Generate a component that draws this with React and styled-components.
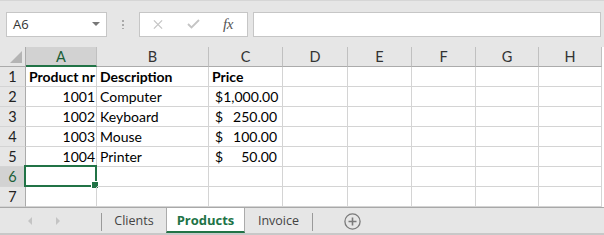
import React from "react"
import styled, { createGlobalStyle } from "styled-components"

const GlobalStyle = createGlobalStyle`
  * { box-sizing: border-box; }
  body {
    margin: 0;
    background: #ffffff;
    font-family: "Lato", "Noto Sans", sans-serif;
  }
`

const green = "#217346"

const Window = styled.div`
  width: 604px;
  height: 235px;
  background: #e6e6e6;
  display: flex;
  flex-direction: column;
  overflow: hidden;
`

const FormulaBar = styled.div`
  height: 47px;
  flex: none;
  display: flex;
  align-items: center;
  padding: 0 3px 0 6px;
  border-top: 1px solid #d6d6d6;
`

const NameBox = styled.div`
  width: 101px;
  height: 25px;
  background: #fff;
  border: 1px solid #c6c6c6;
  display: flex;
  align-items: center;
  justify-content: space-between;
  padding: 0 6px 0 6px;
  font-family: "Open Sans", "Noto Sans", sans-serif;
  font-size: 13px;
  color: #333;
`

const DropArrow = styled.span`
  width: 0;
  height: 0;
  border-left: 4px solid transparent;
  border-right: 4px solid transparent;
  border-top: 4px solid #777;
`

const Grip = styled.div`
  width: 2px;
  height: 10px;
  margin: 0 15px;
  background: radial-gradient(circle, #a9a9a9 0.9px, transparent 1px) 0 0 / 2px 4px repeat-y;
`

const FxGroup = styled.div`
  width: 109px;
  height: 25px;
  background: #fff;
  border: 1px solid #c6c6c6;
  display: flex;
  align-items: center;
  padding-left: 13px;
`

const FxButton = styled.span`
  width: ${(p) => p.w}px;
  display: flex;
  justify-content: center;
  align-items: center;
`

const FxText = styled.span`
  font-family: "Liberation Serif", serif;
  font-style: italic;
  font-size: 15px;
  color: #555;
  letter-spacing: -0.5px;
`

const FormulaInput = styled.div`
  flex: 1;
  height: 25px;
  margin-left: 5px;
  background: #fff;
  border: 1px solid #c6c6c6;
`

const Sheet = styled.div`
  display: grid;
  grid-template-columns: 26px 71px 112px 74px 65px 64px 64px 63px 63px;
  grid-template-rows: repeat(8, 20px);
  background: #fff;
  flex: none;
`

const Corner = styled.div`
  background: #e6e6e6;
  border-right: 1px solid #ababab;
  border-bottom: 1px solid #ababab;
  position: relative;
  &::after {
    content: "";
    position: absolute;
    right: 3px;
    bottom: 3px;
    width: 12px;
    height: 12px;
    background: #b4b4b4;
    clip-path: polygon(100% 0, 100% 100%, 0 100%);
  }
`

const ColHead = styled.div`
  background: ${(p) => (p.active ? "#d2d2d2" : "#e6e6e6")};
  border-right: 1px solid #c0c0c0;
  border-bottom: ${(p) => (p.active ? `2px solid ${green}` : "1px solid #ababab")};
  display: flex;
  align-items: center;
  justify-content: center;
  font-size: 14.5px;
  color: ${(p) => (p.active ? "#1b5e38" : "#333")};
  padding-top: ${(p) => (p.active ? "1px" : "0")};
`

const RowHead = styled.div`
  background: ${(p) => (p.active ? "#d2d2d2" : "#e6e6e6")};
  border-right: 1px solid #ababab;
  border-bottom: 1px solid #d4d4d4;
  display: flex;
  align-items: center;
  justify-content: center;
  font-size: 14.5px;
  color: ${(p) => (p.active ? "#1b5e38" : "#222")};
`

const Cell = styled.div`
  border-right: 1px solid #d4d4d4;
  border-bottom: 1px solid #d4d4d4;
  display: flex;
  align-items: center;
  justify-content: ${(p) => (p.num ? "flex-end" : "flex-start")};
  padding: ${(p) => (p.num ? "0 1px 0 0" : "0 0 0 3px")};
  font-size: 14px;
  font-weight: ${(p) => (p.bold ? 700 : 400)};
  color: #000;
  white-space: nowrap;
  position: relative;
`

const Money = styled(Cell)`
  justify-content: space-between;
  padding: 0 5px 0 6px;
`

const Selection = styled.div`
  position: absolute;
  left: -2px;
  top: -2px;
  right: -1px;
  bottom: -1px;
  border: 2px solid ${green};
  &::after {
    content: "";
    position: absolute;
    right: -4px;
    bottom: -4px;
    width: 6px;
    height: 6px;
    background: ${green};
    border: 1px solid #fff;
  }
`

const TabBar = styled.div`
  flex: 1;
  display: flex;
  align-items: stretch;
  border-top: 1px solid #a8a8a8;
  border-bottom: 2px solid #c8c8c8;
  font-family: "Open Sans", "Noto Sans", sans-serif;
  font-size: 12.5px;
`

const Nav = styled.div`
  width: 101px;
  display: flex;
  align-items: center;
  padding-left: 28px;
  gap: 24px;
`

const Arrow = styled.span`
  width: 0;
  height: 0;
  border-top: 4px solid transparent;
  border-bottom: 4px solid transparent;
  ${(p) => (p.left ? "border-right: 4px solid #c4c4c4;" : "border-left: 4px solid #c4c4c4;")}
`

const Divider = styled.span`
  width: 1px;
  align-self: center;
  height: 18px;
  margin-top: 3px;
  background: #9a9a9a;
`

const Tab = styled.div`
  width: ${(p) => p.w}px;
  display: flex;
  align-items: center;
  justify-content: center;
  padding-top: 1px;
  color: ${(p) => (p.active ? green : "#444")};
  font-weight: ${(p) => (p.active ? 700 : 400)};
  font-size: ${(p) => (p.active ? "13px" : "12.5px")};
  background: ${(p) => (p.active ? "#fff" : "transparent")};
  border-left: ${(p) => (p.active ? "1px solid #ababab" : "none")};
  border-right: ${(p) => (p.active ? "1px solid #ababab" : "none")};
  border-bottom: 2px solid ${(p) => (p.active ? green : "transparent")};
`

const AddSheet = styled.div`
  margin-left: 31px;
  display: flex;
  align-items: center;
  padding-top: 1px;
`

const columns = ["A", "B", "C", "D", "E", "F", "G", "H"]

const products = [
  { nr: 1001, name: "Computer", price: "1,000.00" },
  { nr: 1002, name: "Keyboard", price: "250.00" },
  { nr: 1003, name: "Mouse", price: "100.00" },
  { nr: 1004, name: "Printer", price: "50.00" },
]

const EmptyCells = ({ count }) =>
  Array.from({ length: count }).map((_, i) => <Cell key={i} />)

export default function App() {
  return (
    <>
      <GlobalStyle />
      <Window>
        <FormulaBar>
          <NameBox>
            A6
            <DropArrow />
          </NameBox>
          <Grip />
          <FxGroup>
            <FxButton w={10}>
              <svg width="11" height="11" viewBox="0 0 11 11">
                <path d="M1 1 L10 10 M10 1 L1 10" stroke="#c4c4c4" strokeWidth="1.4" fill="none" />
              </svg>
            </FxButton>
            <FxButton w={60}>
              <svg width="13" height="10" viewBox="0 0 13 10">
                <path d="M1 5 L4.5 8.5 L12 1" stroke="#c4c4c4" strokeWidth="1.8" fill="none" />
              </svg>
            </FxButton>
            <FxButton w={10}>
              <FxText>fx</FxText>
            </FxButton>
          </FxGroup>
          <FormulaInput />
        </FormulaBar>

        <Sheet>
          <Corner />
          {columns.map((c) => (
            <ColHead key={c} active={c === "A"}>
              {c}
            </ColHead>
          ))}

          <RowHead>1</RowHead>
          <Cell bold>Product nr</Cell>
          <Cell bold>Description</Cell>
          <Cell bold>Price</Cell>
          <EmptyCells count={5} />

          {products.map((p, i) => (
            <React.Fragment key={p.nr}>
              <RowHead>{i + 2}</RowHead>
              <Cell num>{p.nr}</Cell>
              <Cell>{p.name}</Cell>
              <Money>
                <span>$</span>
                <span>{p.price}</span>
              </Money>
              <EmptyCells count={5} />
            </React.Fragment>
          ))}

          <RowHead active>6</RowHead>
          <Cell>
            <Selection />
          </Cell>
          <EmptyCells count={7} />

          <RowHead>7</RowHead>
          <EmptyCells count={8} />
        </Sheet>

        <TabBar>
          <Nav>
            <Arrow left />
            <Arrow />
          </Nav>
          <Divider />
          <Tab w={64}>Clients</Tab>
          <Tab w={79} active>
            Products
          </Tab>
          <Tab w={67}>Invoice</Tab>
          <Divider />
          <AddSheet>
            <svg width="17" height="17" viewBox="0 0 17 17">
              <circle cx="8.5" cy="8.5" r="7.6" stroke="#7a7a7a" strokeWidth="1.3" fill="none" />
              <path d="M8.5 4.5 V12.5 M4.5 8.5 H12.5" stroke="#7a7a7a" strokeWidth="1.6" />
            </svg>
          </AddSheet>
        </TabBar>
      </Window>
    </>
  )
}
